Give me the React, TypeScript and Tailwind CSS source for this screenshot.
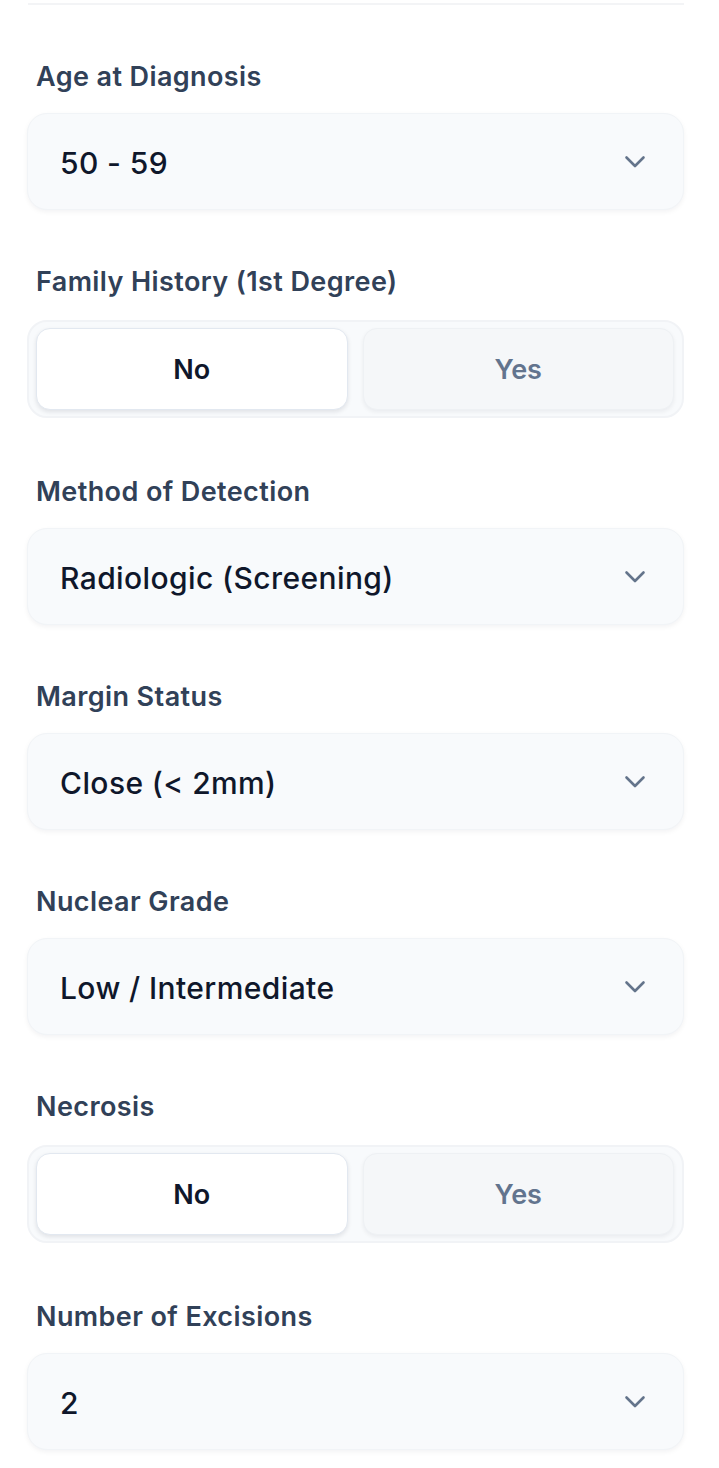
import React from 'react';

const font = { fontFamily: 'Inter, "Noto Sans", sans-serif' };

const Chevron = () => (
    <svg width="22" height="14" viewBox="0 0 22 14" fill="none" className="shrink-0">
        <path d="M2.5 2.5 L11 11 L19.5 2.5" stroke="#64748b" strokeWidth="2.6" strokeLinecap="round" strokeLinejoin="round" />
    </svg>
);

function SelectField({ label, value }: { label: string; value: string }) {
    return (
        <div className="mb-[54px]">
            <label className="block h-[36px] leading-[36px] text-[27px] tracking-[0.4px] font-semibold text-slate-700 mb-[18px] pl-[9px]">{label}</label>
            <div className="h-[97px] flex items-center justify-between pl-[32px] pr-[37px] rounded-[20px] bg-[#f8fafc] border border-[#f1f4f7] shadow-[0_2px_5px_rgba(15,23,42,0.05)]">
                <span className="pt-[3px] text-[30px] tracking-[0.4px] font-medium text-slate-900">{value}</span>
                <Chevron />
            </div>
        </div>
    );
}

function ToggleField({ label, value }: { label: string; value: 'No' | 'Yes' }) {
    return (
        <div className="mb-[56px]">
            <label className="block h-[36px] leading-[36px] text-[27px] tracking-[0.4px] font-semibold text-slate-700 mb-[20px] pl-[9px]">{label}</label>
            <div className="h-[98px] flex gap-[15px] pl-[7px] pr-[8px] py-[6px] rounded-[20px] bg-[#f8fafc] border-2 border-[#f1f3f6]">
                {(['No', 'Yes'] as const).map((opt) => (
                    <button
                        key={opt}
                        className={
                            opt === value
                                ? 'flex-1 pt-[3px] rounded-[14px] bg-white border border-slate-200 shadow-[0_2px_4px_rgba(15,23,42,0.10)] text-[27px] font-semibold text-slate-900'
                                : 'flex-1 pt-[3px] rounded-[14px] bg-[#f5f7f9] border border-[#eef1f4] shadow-[0_2px_4px_rgba(15,23,42,0.06)] text-[27px] font-semibold text-slate-500'
                        }
                    >
                        {opt}
                    </button>
                ))}
            </div>
        </div>
    );
}

export default function App() {
    return (
        <div className="min-h-screen bg-white" style={font}>
            <div className="pt-[3px] pl-[27px] w-[684px]">
                <div className="ml-[1px] h-[2px] bg-[#f3f4f6]" />
                <div className="pt-[54px]">
                    <SelectField label="Age at Diagnosis" value="50 - 59" />
                    <ToggleField label="Family History (1st Degree)" value="No" />
                    <SelectField label="Method of Detection" value="Radiologic (Screening)" />
                    <SelectField label="Margin Status" value="Close (< 2mm)" />
                    <SelectField label="Nuclear Grade" value="Low / Intermediate" />
                    <ToggleField label="Necrosis" value="No" />
                    <SelectField label="Number of Excisions" value="2" />
                </div>
            </div>
        </div>
    );
}
